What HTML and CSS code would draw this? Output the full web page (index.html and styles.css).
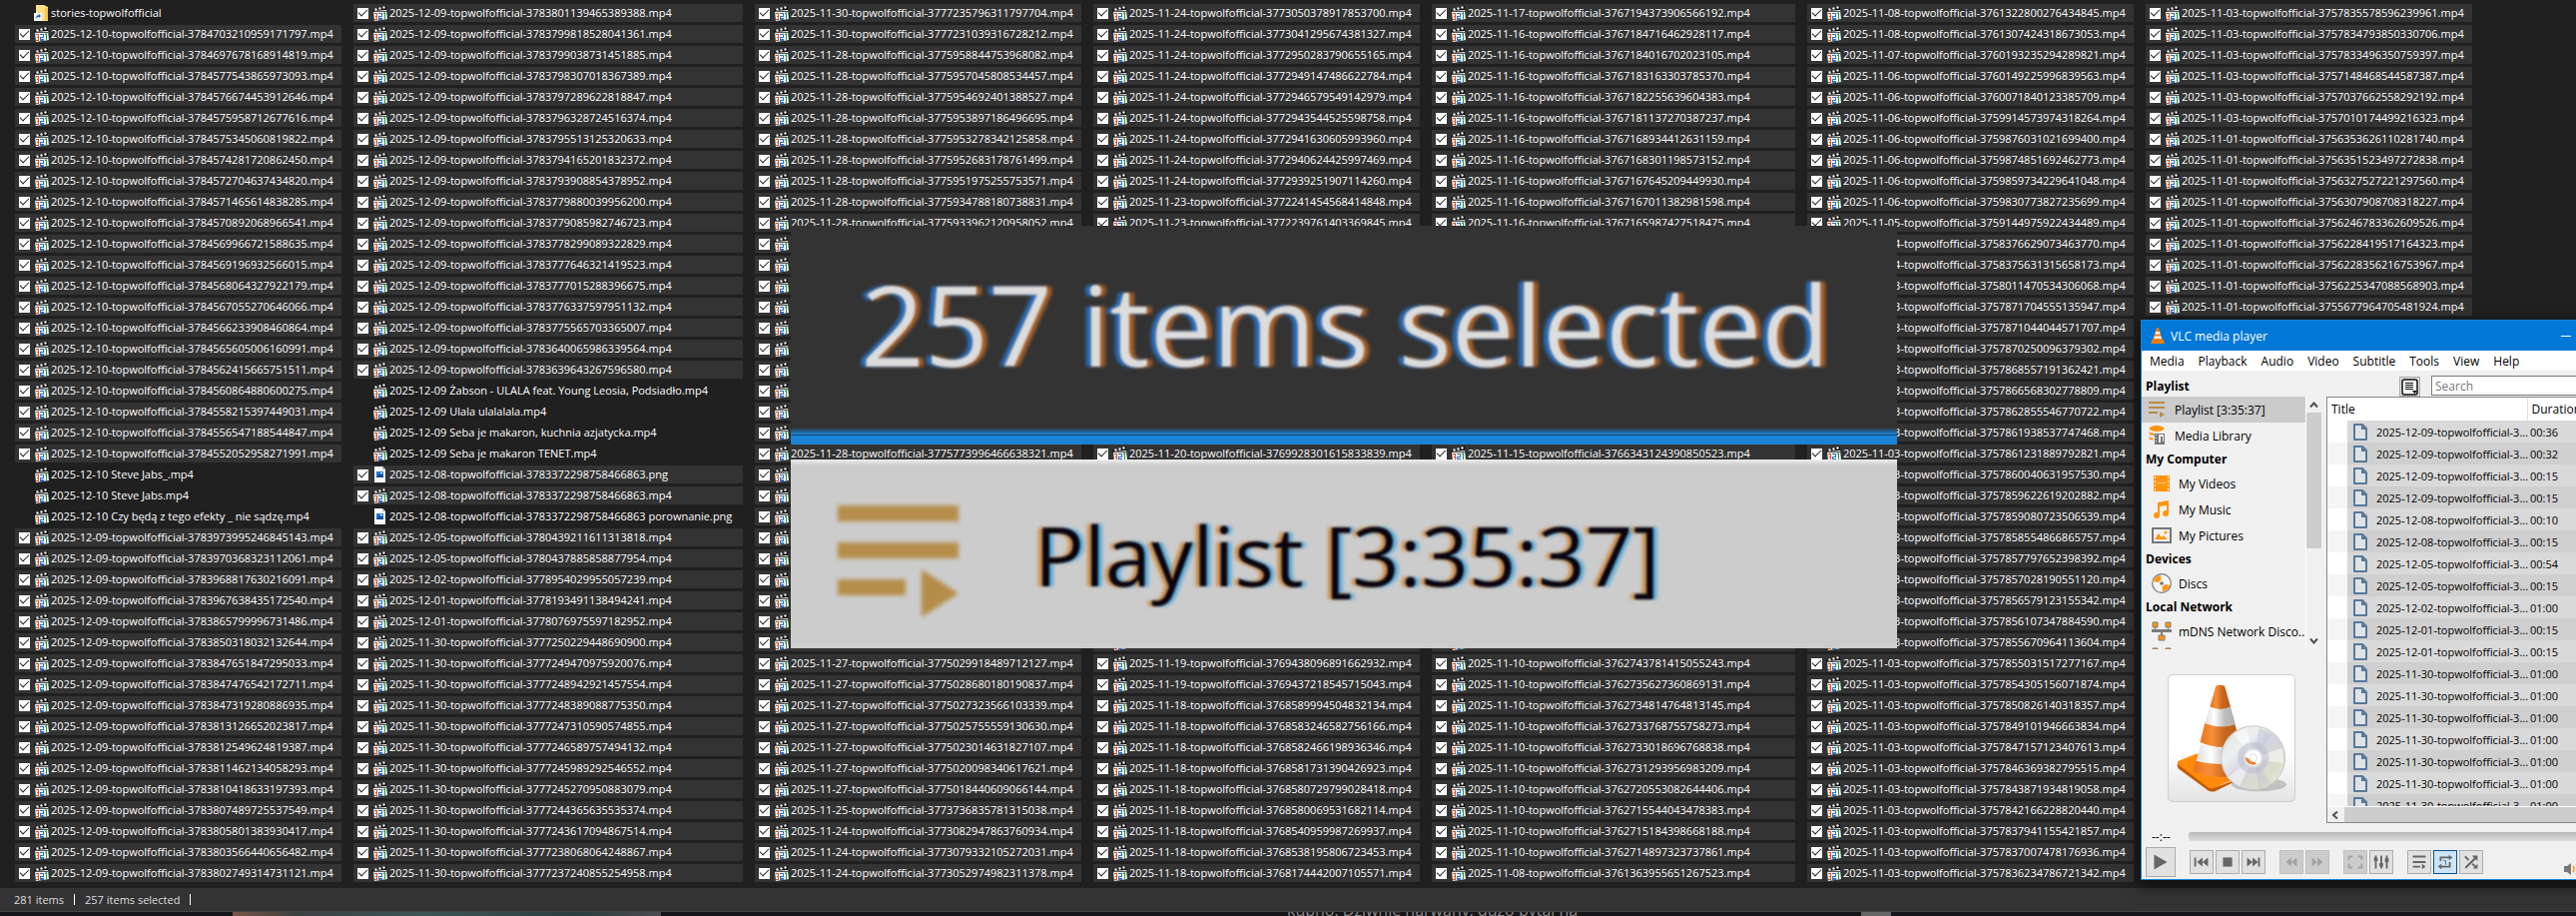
FILE: index.html
```html
<!DOCTYPE html>
<html lang="en">
<head>
    <meta charset="utf-8">
    <title>stories-topwolfofficial</title>
    <link rel="stylesheet" href="styles.css">
</head>
<body>
    <svg class="defs" aria-hidden="true">
        <symbol id="clapper" viewBox="0 0 15 16">
            <path d="M0 5L14 1V5L1 8Z" fill="#111"/>
            <path d="M2 4l2-1 1 2-2 1zM6 3l2-1 1 2-2 1zM10 2l2-1 1 2-2 1z" fill="#e8e8e8"/>
            <path d="M1 6L14 5L15 14L2 16Z" fill="#f2f2f2"/>
            <path d="M1 6h13v1H1z" fill="#555"/>
            <path d="M2 8h3v7H2v-1h2v-2H3v-1h1V9H2z" fill="#d9531e"/>
            <path d="M6 8h4v4H7v1h3v2H6v-4h3V9H6z" fill="#2f74c8"/>
            <path d="M11 8l2-1v7h-1V9h-1z" fill="#2a9a3a"/>
        </symbol>
        <symbol id="png" viewBox="0 0 15 16">
            <path d="M2 0h8l3 3v13H2z" fill="#f7f7f7"/>
            <path d="M10 0v3h3z" fill="#b8bec4"/>
            <path d="M4 5h7v6H4z" fill="#2478d4"/>
            <path d="M4 11l3-4 2 2 2-1v3z" fill="#0d4f9e"/>
            <path d="M8 6h2v1H8z" fill="#fff"/>
        </symbol>
        <symbol id="folder" viewBox="0 0 15 16">
            <path d="M2 0h8l4 2v14H2z" fill="#ffe08a"/>
            <path d="M11 3h3v12h-3z" fill="#f3c94f"/>
            <path d="M0 8h8v8H0z" fill="#f4f8fc"/>
            <path d="M2 14c0-3 1-4 3-4V9l2 2-2 2v-1c-1 0-2 0-3 2z" fill="#1d65b5"/>
        </symbol>
        <symbol id="doc" viewBox="0 0 14 17">
            <path d="M1 1h8l4 4v11H1z" fill="#dfe3e6" stroke="#56799a" stroke-width="2" stroke-linejoin="round"/>
            <path d="M8 1v5h5z" fill="#56799a"/>
        </symbol>
        <symbol id="playlist" viewBox="0 0 16 16">
            <path d="M0 0h16v2H0zM0 5h16v2H0zM0 10h9v2H0z" fill="currentColor"/>
            <path d="M11 10l5 3-5 3z" fill="currentColor"/>
        </symbol>
        <symbol id="network" viewBox="0 0 20 20">
            <path d="M0 8h20v3H0zM3 6h1v3H3zM16 6h1v3h-1zM9 10h2v4H9z" fill="#7d7d7d"/>
            <path d="M1 1h5v5H1zM14 1h5v5h-5zM7 14h6v5H7z" fill="#ff950e" stroke="#7d7d7d"/>
        </symbol>
    </svg>

    <div class="desktop">
        <main class="explorer">
            <div class="files" id="files"></div>
            <footer class="status">
                <span>281 items</span>
                <span>257 items selected</span>
            </footer>
        </main>
        <div class="behind">
            <div class="behind-photo"></div>
            <p>kupno. Dziwnie narwany, dużo pytał na</p>
            <div class="behind-thumb"></div>
        </div>

        <div class="callout callout-items"><span>257 items selected</span></div>
        <div class="callout callout-playlist">
            <svg class="callout-icon" viewBox="0 0 121 112" aria-hidden="true">
                <path d="M0 0h121v16H0zM0 37h121v16H0zM0 74h68v16H0zM84 64l37 24-37 24z" fill="#b48d49"/>
            </svg>
            <span>Playlist [3:35:37]</span>
        </div>

        <section class="vlc">
            <header class="titlebar">
                <svg class="cone" viewBox="0 0 14 16" aria-hidden="true">
                    <path d="M2 11h10l2 5H0z" fill="#f07d00"/>
                    <path d="M6 0h2l3.500 12c-2 2-7 2-9 0z" fill="#ef7a10"/>
                    <path d="M5 4h4l.7 2.500H4.300zM3.700 8.500h6.600l.7 2.500H3z" fill="#f5f5f5"/>
                </svg>
                <span>VLC media player</span>
                <button class="minimise" aria-label="Minimise"></button>
            </header>
            <nav class="menu">
                <button>Media</button><button>Playback</button><button>Audio</button><button>Video</button>
                <button>Subtitle</button><button>Tools</button><button>View</button><button>Help</button>
            </nav>
            <div class="content">
                <div class="side">
                    <div class="side-head">
                        <b>Playlist</b>
                        <button class="view-mode" aria-label="Change view">
                            <svg viewBox="0 0 17 17" aria-hidden="true">
                                <rect x="1" y="1" width="15" height="15" rx="2" fill="#f6f9fb" stroke="#111" stroke-width="1.500"/>
                                <path d="M4 4h8v1H4zM4 6h8v1H4zM4 8h8v1H4zM4 10h8v1H4zM11 12h5l-2.500 3z" fill="#111"/>
                            </svg>
                        </button>
                    </div>
                    <div class="tree-wrap">
                        <div class="tree">
                            <a href="#playlist" class="node active"><svg class="i16" aria-hidden="true"><use href="#playlist"/></svg>Playlist [3:35:37]</a>
                            <a href="#library" class="node">
                                <svg class="i16" viewBox="0 0 16 20" aria-hidden="true">
                                    <ellipse cx="8" cy="3" rx="7.500" ry="3" fill="#ff950e"/>
                                    <path d="M.5 6c2 2 6 2 6 2v2C3 10 .5 9 .5 8zM.5 11c2 2 4 1.500 4 1.500v2C2 14.500.5 14 .5 13z" fill="#ff950e"/>
                                    <path d="M6 8h10v11H6z" fill="#777"/>
                                    <path d="M7 9h1v1H7zM7 12h1v1H7zM7 15h1v1H7zM10 9h5v7h-1v-5h-2v6h-2z" fill="#f0f0f0"/>
                                </svg>Media Library</a>
                            <h3>My Computer</h3>
                            <a href="#videos" class="node child">
                                <svg class="i20" viewBox="0 0 20 20" aria-hidden="true">
                                    <path d="M2 2h16v16H2z" fill="#ff950e"/>
                                    <path d="M3 3h1v2H3zM3 7h1v2H3zM3 11h1v2H3zM3 15h1v2H3zM16 3h1v2h-1zM16 7h1v2h-1zM16 11h1v2h-1zM16 15h1v2h-1z" fill="#fff"/>
                                    <path d="M5 9h10v1H5z" fill="#ffc67a"/>
                                </svg>My Videos</a>
                            <a href="#music" class="node child">
                                <svg class="i20" viewBox="0 0 20 20" aria-hidden="true">
                                    <path d="M6 3l11-2v13h-2V6L8 7v9H6z" fill="#ff950e"/>
                                    <circle cx="5" cy="16" r="3" fill="#ff950e"/><circle cx="14" cy="14" r="3" fill="#ff950e"/>
                                </svg>My Music</a>
                            <a href="#pictures" class="node child">
                                <svg class="i20" viewBox="0 0 20 20" aria-hidden="true">
                                    <path d="M1 3h18v14H1z" fill="#f0f0f0" stroke="#777" stroke-width="2"/>
                                    <path d="M3 14l4-6 3 4 2-2 4 4z" fill="#ff950e"/><circle cx="14" cy="7" r="1.500" fill="#ff950e"/>
                                </svg>My Pictures</a>
                            <h3>Devices</h3>
                            <a href="#discs" class="node child">
                                <svg class="i20" viewBox="0 0 20 20" aria-hidden="true">
                                    <circle cx="10" cy="10" r="9.300" fill="#f7f7f7" stroke="#777" stroke-width="1.200"/>
                                    <path d="M10 10L2 8A8 8 0 0 1 9 2zM10 10l8 2a8 8 0 0 1-7 6z" fill="#ff950e"/>
                                    <circle cx="10" cy="10" r="3.200" fill="#f0f0f0"/><circle cx="10" cy="10" r="1.800" fill="#777"/>
                                </svg>Discs</a>
                            <h3>Local Network</h3>
                            <a href="#mdns" class="node child"><svg class="i20" aria-hidden="true"><use href="#network"/></svg>mDNS Network Disco...</a>
                            <a href="#sap" class="node child" aria-label="Network streams"><svg class="i20" aria-hidden="true"><use href="#network"/></svg></a>
                        </div>
                        <div class="vscroll">
                            <svg viewBox="0 0 15 15" aria-hidden="true"><path d="M4 10l3.500-4 3.500 4" fill="none" stroke="#505050" stroke-width="2"/></svg>
                            <div class="vthumb"></div>
                            <svg viewBox="0 0 15 15" aria-hidden="true"><path d="M4 5l3.500 4 3.500-4" fill="none" stroke="#505050" stroke-width="2"/></svg>
                        </div>
                    </div>
                    <div class="art">
                        <svg viewBox="0 0 128 128" aria-hidden="true">
                            <defs>
                                <linearGradient id="og"><stop offset="0" stop-color="#e8741a"/><stop offset=".3" stop-color="#f58f3a"/><stop offset=".6" stop-color="#c9661f"/><stop offset="1" stop-color="#b85c1a"/></linearGradient>
                                <linearGradient id="wg"><stop offset="0" stop-color="#ddd"/><stop offset=".3" stop-color="#fff"/><stop offset=".65" stop-color="#bdbdbd"/><stop offset="1" stop-color="#b0b0b0"/></linearGradient>
                                <linearGradient id="dg" x2="1" y2="1"><stop offset="0" stop-color="#d9dbd8"/><stop offset=".3" stop-color="#eef0f0"/><stop offset=".5" stop-color="#d3d3e2"/><stop offset=".75" stop-color="#dcdccb"/><stop offset="1" stop-color="#eceff1"/></linearGradient>
                            </defs>
                            <ellipse cx="92" cy="111" rx="28" ry="7" fill="#000" opacity=".18"/>
                            <path d="M9 90L47 114Q90 100 84 92V100L47 118Q43 119 40 117L10 95Q8 93 9 90Z" fill="#c65a00"/>
                            <path d="M10 87L28 80H80L86 98L47 114Q43 116 40 114L10 91Q8 89 10 87Z" fill="#ff8a0c"/>
                            <path d="M28 87Q50 94 78 87L81 98Q54 109 25 98Q24 96 28 87Z" fill="url(#og)"/>
                            <path d="M33 70Q52 77 73 70L78 87Q52 94 28 87Z" fill="url(#wg)"/>
                            <path d="M37 48Q53 55 67 48L73 70Q52 77 32 68Z" fill="url(#og)"/>
                            <path d="M42 32Q53 37 63 32L68 50Q53 55 37 49Z" fill="url(#wg)"/>
                            <path d="M48 11Q52 9 57 11L63 32Q53 37 42 32Z" fill="url(#og)"/>
                            <circle cx="86" cy="84" r="32.500" fill="url(#dg)" stroke="#c4c6c8"/>
                            <path d="M86 84L66 60L80 53ZM86 84l30-10 1 16zM86 84l-26 20 12 9z" fill="#fff" opacity=".5"/>
                            <path d="M86 84L92 53L106 60ZM86 84l6 31 12-5z" fill="#b9b9cf" opacity=".35"/>
                            <circle cx="86" cy="84" r="16" fill="#b9b9ca" opacity=".5"/>
                            <circle cx="86" cy="84" r="10" fill="#dcdce4"/>
                            <circle cx="86" cy="84" r="8" fill="#fff"/>
                            <path d="M78 83l12 7a8 8 0 0 1-12-7z" fill="#e58430"/>
                            <circle cx="86" cy="84" r="4" fill="none" stroke="#ddd"/>
                        </svg>
                    </div>
                </div>
                <div class="list-side">
                    <input class="search" type="text" placeholder="Search" aria-label="Search">
                    <div class="list-box">
                        <div class="list-view">
                            <table>
                                <colgroup><col class="col-indent"><col class="col-title"><col></colgroup>
                                <thead><tr><th class="title-head" colspan="2">Title</th><th>Duration</th></tr></thead>
                                <tbody id="tracks"></tbody>
                            </table>
                        </div>
                        <div class="hscroll">
                            <svg viewBox="0 0 15 15" aria-hidden="true"><path d="M10 4L6 7.500l4 3.500" fill="none" stroke="#505050" stroke-width="2"/></svg>
                            <div class="hthumb"></div>
                        </div>
                    </div>
                </div>
            </div>
            <div class="seek">
                <span>--:--</span>
                <input type="range" aria-label="Seek" disabled>
            </div>
            <div class="controls">
                <button class="play" aria-label="Play"><svg viewBox="0 0 30 30"><path d="M8 7l14 8-14 8z"/></svg></button>
                <div class="group">
                    <button aria-label="Previous"><svg viewBox="0 0 24 24"><path d="M4 7h2v10H4zM13 7v10l-6-5zM19 7v10l-6-5z"/></svg></button>
                    <button aria-label="Stop"><svg viewBox="0 0 24 24"><path d="M7 7h10v10H7z"/></svg></button>
                    <button aria-label="Next"><svg viewBox="0 0 24 24"><path d="M5 7v10l6-5zM11 7v10l6-5zM17 7h2v10h-2z"/></svg></button>
                </div>
                <div class="group">
                    <button aria-label="Slower" disabled><svg viewBox="0 0 24 24"><path d="M12 7v10l-6-5zM18 7v10l-6-5z"/></svg></button>
                    <button aria-label="Faster" disabled><svg viewBox="0 0 24 24"><path d="M6 7v10l6-5zM12 7v10l6-5z"/></svg></button>
                </div>
                <div class="group">
                    <button aria-label="Fullscreen" disabled><svg viewBox="0 0 24 24"><path d="M4 5h5v2H6v3H4zM15 5h5v5h-2V7h-3zM4 14h2v3h3v2H4zM18 14h2v5h-5v-2h3z"/></svg></button>
                    <button aria-label="Extended settings"><svg viewBox="0 0 24 24"><path d="M5 5h2v14H5zM4 7h4v4H4zM11 5h2v14h-2zM10 13h4v4h-4zM17 5h2v14h-2zM16 8h4v4h-4z"/></svg></button>
                </div>
                <div class="group">
                    <button aria-label="Playlist"><svg viewBox="0 0 24 24"><path d="M5 5h14v2H5zM5 11h14v2H5zM5 16h8v2H5zM15 14l4 3-4 3z"/></svg></button>
                    <button class="on" aria-label="Loop"><svg viewBox="0 0 24 24"><path d="M6 11V6h10V4l4 3-4 3V8H8v3zM18 12v6H8v2l-4-3 4-3v2h8v-4zM10 10h3v5h-1v-4h-2z"/></svg></button>
                    <button aria-label="Random"><svg viewBox="0 0 24 24"><path d="M6 5l4 4-1.500 1.500-4-4zM19 5v6l-2-2-10.500 10L5 17.500 15 7.500 13 5zM14 13l3 3 2-2v5h-5l1.500-1.500-3-3z"/></svg></button>
                </div>
                <svg class="volume" viewBox="0 0 22 14" aria-hidden="true">
                    <path d="M0 4h3l4-3v12l-4-3H0z" fill="#777"/>
                    <path d="M9 4q2 3 0 6M12 2q3 5 0 10M15 0q4 7 0 14" fill="none" stroke="#ff950e" stroke-width="1.500"/>
                </svg>
            </div>
        </section>
    </div>
    <script src="files.js"></script>
</body>
</html>
```
FILE: styles.css
```css
* {
    box-sizing: border-box;
}

body {
    margin: 0;
    background: #202020;
    font-family: "Open Sans", "Noto Sans", sans-serif;
    font-size: 11px;
    color: #fff;
}

button,
input {
    font: inherit;
    margin: 0;
}

.defs {
    display: none;
}

.desktop {
    position: relative;
    min-height: 100vh;
    overflow: hidden;
}

/* file list */
.files {
    display: grid;
    grid-template-columns: 327fr 390fr 327fr 327fr 364fr 327fr 327fr 92fr;
    column-gap: 12px;
    padding: 4px 0 6px 15px;
}

.column {
    display: flex;
    flex-direction: column;
    gap: 3px;
}

.file {
    display: flex;
    align-items: center;
    height: 18px;
    padding-left: 4px;
    line-height: 16px;
    white-space: nowrap;
}

.file.selected {
    background: #333;
}

.file input {
    appearance: none;
    width: 11px;
    height: 11px;
    margin-right: 4px;
    background: #fff;
    visibility: hidden;
}

.file.selected input {
    visibility: visible;
    display: flex;
    align-items: center;
    justify-content: center;
}

.file input:checked::before {
    content: "";
    width: 8px;
    height: 4px;
    margin-bottom: 3px;
    border-left: 1px solid #222;
    border-bottom: 1px solid #222;
    transform: rotate(-45deg);
}

.file svg {
    width: 15px;
    height: 16px;
    margin-right: 2px;
}

.status {
    display: flex;
    align-items: center;
    height: 23px;
    padding-left: 14px;
    background: #333;
    color: #ddd;
}

.status span {
    display: flex;
    align-items: center;
}

.status span::after {
    content: "";
    width: 1px;
    height: 11px;
    margin: 0 10px;
    background: #fff;
}

.behind {
    display: grid;
    grid-template-columns: 233fr 429fr 627fr 575fr 30fr 686fr;
    height: 5px;
    overflow: hidden;
    background: #161517;
    border-top: 1px solid #444;
}

.behind-photo {
    grid-column: 2;
    background: linear-gradient(90deg, #7a5446, #3b4040 15%, #3d5555 45%, #2b3c3c 80%, #4a4d4d);
}

.behind p {
    grid-column: 4;
    margin: -4px 0 0;
    font-size: 16px;
    line-height: 4px;
    color: #8a8a8a;
}

.behind-thumb {
    background: #666;
}

/* enlarged details */
.callout {
    position: absolute;
    left: 792px;
    right: 680px;
    display: flex;
    align-items: center;
    white-space: nowrap;
}

.callout span {
    filter: blur(1px);
}

.callout-items {
    top: 226px;
    height: 219px;
    padding: 0 0 24px 70px;
    background: linear-gradient(#333 0 202px, #1883d7 209px, #16476f 209px 210px, #1883d7 210px);
    color: #dcdcdc;
    font-size: 112px;
    text-shadow: -5px 0 3px #2f6fb8, 5px 0 3px #a5602c;
}

.callout-playlist {
    top: 460px;
    height: 189px;
    gap: 76px;
    padding: 0 0 0 47px;
    background: linear-gradient(#eee, #ccc 6px);
    color: #0a0510;
    font-size: 83px;
    text-shadow: -4px 0 3px #c98a45, 4px 0 3px #58a9d8;
}

.callout-icon {
    width: 121px;
    height: 112px;
    margin-top: 14px;
    filter: blur(2px);
}

/* vlc */
.vlc {
    position: absolute;
    top: 320px;
    left: 2144px;
    right: -40px;
    background: #f0f0f0;
    border: 1px solid #1883d7;
    box-shadow: 0 4px 14px 2px rgba(0, 0, 0, 0.6);
    color: #000;
    font-size: 12px;
}

.titlebar {
    display: flex;
    align-items: center;
    gap: 6px;
    height: 30px;
    padding: 0 44px 0 9px;
    background: #0078d7;
    color: #fff;
}

.cone {
    width: 14px;
    height: 16px;
}

.minimise {
    width: 10px;
    height: 1px;
    margin-left: auto;
    padding: 0;
    border: 0;
    background: #fff;
}

.menu {
    display: flex;
    gap: 14px;
    height: 20px;
    padding: 0 8px;
    background: #fff;
}

.menu button {
    padding: 0;
    border: 0;
    background: none;
    color: #000;
}

.content {
    display: flex;
    gap: 5px;
    padding-top: 5px;
}

.side {
    width: 180px;
}

.side-head {
    display: flex;
    align-items: center;
    position: relative;
    height: 21px;
    padding-left: 4px;
}

.view-mode {
    position: absolute;
    left: 258px;
    width: 21px;
    height: 20px;
    padding: 1px;
    border: 1px solid #adadad;
    background: #e1e1e1;
}

.view-mode svg,
.controls button svg {
    display: block;
}

.tree-wrap {
    display: flex;
    height: 253px;
}

.tree {
    flex: 1;
    min-width: 0;
    overflow: hidden;
    border-right: 1px solid #fff;
}

.node {
    display: flex;
    align-items: center;
    gap: 10px;
    height: 26px;
    padding-left: 7px;
    color: #000;
    text-decoration: none;
    white-space: nowrap;
}

.node.active {
    background: #cbcbcb;
}

.node.active svg {
    color: #b48d49;
}

.node.child {
    gap: 7px;
    padding-left: 10px;
}

.node svg {
    flex: none;
}

.i16 {
    width: 16px;
    height: 20px;
}

.i20 {
    width: 20px;
    height: 20px;
}

.tree h3 {
    margin: 0;
    padding-left: 4px;
    font-size: 12px;
    line-height: 22px;
}

.vscroll {
    display: flex;
    flex-direction: column;
    width: 15px;
}

.vthumb {
    height: 136px;
    margin-bottom: auto;
    background: #cdcdcd;
}

.vscroll svg,
.hscroll svg {
    width: 15px;
    height: 16px;
}

.art {
    width: 128px;
    margin: 25px 0 0 26px;
    border: 1px solid #cfcfcf;
    border-radius: 5px;
    background: linear-gradient(#fff 60%, #e4e4e4);
}

.art svg {
    display: block;
}

.list-side {
    flex: 1;
    min-width: 0;
    display: flex;
    flex-direction: column;
}

.search {
    height: 20px;
    margin: 0 0 1px 105px;
    padding: 0 3px;
    border: 1px solid #7a7a7a;
    background: #fff;
}

.search::placeholder {
    color: #7a7a7a;
}

.list-box {
    border: 1px solid #828790;
    background: #fff;
}

.list-view {
    height: 409px;
    overflow: hidden;
}

table {
    width: 100%;
    border-collapse: collapse;
    table-layout: fixed;
}

.col-indent {
    width: 20px;
}

.col-title {
    width: 180px;
}

th {
    height: 23px;
    padding: 0 4px;
    text-align: left;
    font-weight: normal;
}

.title-head {
    border-right: 1px solid #e0e0e0;
}

td {
    height: 22px;
    padding: 0 3px;
    background: #d9d9d9;
    font-size: 11px;
    white-space: nowrap;
}

tr:nth-child(even) td {
    background: #cfcfcf;
}

td.indent {
    background: #fff;
}

tr:nth-child(even) td.indent {
    background: #f5f5f5;
}

.track {
    display: flex;
    align-items: center;
    gap: 9px;
    padding-left: 3px;
}

.track svg {
    flex: none;
    width: 14px;
    height: 17px;
}

.hscroll {
    display: flex;
    align-items: center;
    gap: 2px;
    height: 16px;
    background: #f0f0f0;
    border-top: 1px solid #fff;
}

.hthumb {
    flex: 1;
    height: 15px;
    background: #cdcdcd;
}

.seek {
    display: flex;
    align-items: center;
    gap: 18px;
    padding: 4px 0 0 10px;
    height: 22px;
}

.seek input {
    appearance: none;
    flex: 1;
    height: 9px;
    border-radius: 3px;
    background: linear-gradient(#b9b9b9, #dedede);
}

.seek input::-webkit-slider-thumb {
    appearance: none;
    width: 0;
}

.controls {
    display: flex;
    align-items: center;
    gap: 14px;
    padding: 2px 4px;
}

.group {
    display: flex;
    gap: 2px;
}

.controls button {
    width: 24px;
    height: 24px;
    padding: 0;
    border: 1px solid #adadad;
    background: #e1e1e1;
    fill: #666;
}

.controls .play {
    width: 30px;
    height: 30px;
}

.controls button:disabled {
    border-color: #bfbfbf;
    background: #ccc;
    fill: #a3a3a3;
}

.controls .on {
    border-color: #005499;
    background: #cce4f7;
}

.volume {
    width: 22px;
    height: 14px;
    margin: 14px 25px 0 auto;
}
```
FILE: files.js
```js
// "MM-DD id" is a selected video, "-name" an unselected file, "+name" a selected one
const columns = [
    [
        '-stories-topwolfofficial',
        '12-10 3784703210959171797', '12-10 3784697678168914819', '12-10 3784577543865973093',
        '12-10 3784576674453912646', '12-10 3784575958712677616', '12-10 3784575345060819822',
        '12-10 3784574281720862450', '12-10 3784572704637434820', '12-10 3784571465614838285',
        '12-10 3784570892068966541', '12-10 3784569966721588635', '12-10 3784569196932566015',
        '12-10 3784568064327922179', '12-10 3784567055270646066', '12-10 3784566233908460864',
        '12-10 3784565605006160991', '12-10 3784562415665751511', '12-10 3784560864880600275',
        '12-10 3784558215397449031', '12-10 3784556547188544847', '12-10 3784552052958271991',
        '-2025-12-10 Steve Jabs_.mp4',
        '-2025-12-10 Steve Jabs.mp4',
        '-2025-12-10 Czy będą z tego efekty _ nie sądzę.mp4',
        '12-09 3783973995246845143', '12-09 3783970368323112061', '12-09 3783968817630216091',
        '12-09 3783967638435172540', '12-09 3783865799996731486', '12-09 3783850318032132644',
        '12-09 3783847651847295033', '12-09 3783847476542172711', '12-09 3783847319280886935',
        '12-09 3783813126652023817', '12-09 3783812549624819387', '12-09 3783811462134058293',
        '12-09 3783810418633197393', '12-09 3783807489725537549', '12-09 3783805801383930417',
        '12-09 3783803566440656482', '12-09 3783802749314731121'
    ],
    [
        '12-09 3783801139465389388', '12-09 3783799818528041361', '12-09 3783799038731451885',
        '12-09 3783798307018367389', '12-09 3783797289622818847', '12-09 3783796328724516374',
        '12-09 3783795513125320633', '12-09 3783794165201832372', '12-09 3783793908854378952',
        '12-09 3783779880039956200', '12-09 3783779085982746723', '12-09 3783778299089322829',
        '12-09 3783777646321419523', '12-09 3783777015288396675', '12-09 3783776337597951132',
        '12-09 3783775565703365007', '12-09 3783640065986339564', '12-09 3783639643267596580',
        '-2025-12-09 Żabson - ULALA feat. Young Leosia, Podsiadło.mp4',
        '-2025-12-09 Ulala ulalalala.mp4',
        '-2025-12-09 Seba je makaron, kuchnia azjatycka.mp4',
        '-2025-12-09 Seba je makaron TENET.mp4',
        '+2025-12-08-topwolfofficial-3783372298758466863.png',
        '12-08 3783372298758466863',
        '-2025-12-08-topwolfofficial-3783372298758466863 porownanie.png',
        '12-05 3780439211611313818', '12-05 3780437885858877954', '12-02 3778954029955057239',
        '12-01 3778193491138494241', '12-01 3778076975597182952', '11-30 3777250229448690900',
        '11-30 3777249470975920076', '11-30 3777248942921457554', '11-30 3777248389088775350',
        '11-30 3777247310590574855', '11-30 3777246589757494132', '11-30 3777245989292546552',
        '11-30 3777245270950883079', '11-30 3777244365635535374', '11-30 3777243617094867514',
        '11-30 3777238068064248867', '11-30 3777237240855254958'
    ],
    [
        '11-30 3777235796311797704', '11-30 3777231039316728212', '11-28 3775958844753968082',
        '11-28 3775957045808534457', '11-28 3775954692401388527', '11-28 3775953897186496695',
        '11-28 3775953278342125858', '11-28 3775952683178761499', '11-28 3775951975255753571',
        '11-28 3775934788180738831', '11-28 3775933962120958052',
        '', '', '', '', '', '', '', '', '', '',
        '11-28 3775773996466638321',
        '', '', '', '', '', '', '', '', '',
        '11-27 3775029918489712127', '11-27 3775028680180190837', '11-27 3775027323566103339',
        '11-27 3775025755559130630', '11-27 3775023014631827107', '11-27 3775020098340617621',
        '11-27 3775018440609066144', '11-25 3773736835781315038', '11-24 3773082947863760934',
        '11-24 3773079332105272031', '11-24 3773052974982311378'
    ],
    [
        '11-24 3773050378917853700', '11-24 3773041295674381327', '11-24 3772950283790655165',
        '11-24 3772949147486622784', '11-24 3772946579549142979', '11-24 3772943544525598758',
        '11-24 3772941630605993960', '11-24 3772940624425997469', '11-24 3772939251907114260',
        '11-23 3772241454568414848', '11-23 3772239761403369845',
        '', '', '', '', '', '', '', '', '', '',
        '11-20 3769928301615833839',
        '', '', '', '', '', '', '', '', '',
        '11-19 3769438096891662932', '11-19 3769437218545715043', '11-18 3768589994504832134',
        '11-18 3768583246582756166', '11-18 3768582466198936346', '11-18 3768581731390426923',
        '11-18 3768580729799028418', '11-18 3768580069531682114', '11-18 3768540959987269937',
        '11-18 3768538195806723453', '11-18 3768174442007105571'
    ],
    [
        '11-17 3767194373906566192', '11-16 3767184716462928117', '11-16 3767184016702023105',
        '11-16 3767183163303785370', '11-16 3767182255639604383', '11-16 3767181137270387237',
        '11-16 3767168934412631159', '11-16 3767168301198573152', '11-16 3767167645209449930',
        '11-16 3767167011382981598', '11-16 3767165987427518475',
        '', '', '', '', '', '', '', '', '', '',
        '11-15 3766343124390850523',
        '', '', '', '', '', '', '', '', '',
        '11-10 3762743781415055243', '11-10 3762735627360869131', '11-10 3762734814764813145',
        '11-10 3762733768755758273', '11-10 3762733018696768838', '11-10 3762731293956983209',
        '11-10 3762720553082644406', '11-10 3762715544043478383', '11-10 3762715184398668188',
        '11-10 3762714897323737861', '11-08 3761363955651267523'
    ],
    [
        '11-08 3761322800276434845', '11-08 3761307424318673053', '11-07 3760193235294289821',
        '11-06 3760149225996839563', '11-06 3760071840123385709', '11-06 3759914573974318264',
        '11-06 3759876031021699400', '11-06 3759874851692462773', '11-06 3759859734229641048',
        '11-06 3759830773827235699', '11-05 3759144975922434489', '11-04 3758376629073463770',
        '11-04 3758375631315658173', '11-03 3758011470534306068', '11-03 3757871704555135947',
        '11-03 3757871044044571707', '11-03 3757870250096379302', '11-03 3757868557191362421',
        '11-03 3757866568302778809', '11-03 3757862855546770722', '11-03 3757861938537747468',
        '11-03 3757861231889792821', '11-03 3757860040631957530', '11-03 3757859622619202882',
        '11-03 3757859080723506539', '11-03 3757858554866865757', '11-03 3757857797652398392',
        '11-03 3757857028190551120', '11-03 3757856579123155342', '11-03 3757856107347884590',
        '11-03 3757855670964113604', '11-03 3757855031517277167', '11-03 3757854305156071874',
        '11-03 3757850826140318357', '11-03 3757849101946663834', '11-03 3757847157123407613',
        '11-03 3757846369382795515', '11-03 3757843871934819058', '11-03 3757842166228820440',
        '11-03 3757837941155421857', '11-03 3757837007478176936', '11-03 3757836234786721342'
    ],
    [
        '11-03 3757835578596239961', '11-03 3757834793850330706', '11-03 3757833496350759397',
        '11-03 3757148468544587387', '11-03 3757037662558292192', '11-03 3757010174499216323',
        '11-01 3756353626110281740', '11-01 3756351523497272838', '11-01 3756327527221297560',
        '11-01 3756307908708318227', '11-01 3756246783362609526', '11-01 3756228419517164323',
        '11-01 3756228356216753967', '11-01 3756225347088568903', '11-01 3755677964705481924'
    ]
];

const tracks = [
    ['12-09', '00:36'], ['12-09', '00:32'], ['12-09', '00:15'], ['12-09', '00:15'],
    ['12-08', '00:10'], ['12-08', '00:15'], ['12-05', '00:54'], ['12-05', '00:15'],
    ['12-02', '01:00'], ['12-01', '00:15'], ['12-01', '00:15'], ['11-30', '01:00'],
    ['11-30', '01:00'], ['11-30', '01:00'], ['11-30', '01:00'], ['11-30', '01:00'],
    ['11-30', '01:00'], ['11-30', '01:00']
];

function fileRow(entry) {
    let name = '';
    let selected = true;
    if (entry[0] === '-' || entry[0] === '+') {
        name = entry.slice(1);
        selected = entry[0] === '+';
    } else if (entry) {
        const [date, id] = entry.split(' ');
        name = `2025-${date}-topwolfofficial-${id}.mp4`;
    }
    let icon = 'clapper';
    if (name.endsWith('.png')) icon = 'png';
    if (name.startsWith('stories')) icon = 'folder';
    return `<label class="file${selected ? ' selected' : ''}">
        <input type="checkbox"${selected ? ' checked' : ''}>
        <svg aria-hidden="true"><use href="#${icon}"/></svg>${name}</label>`;
}

document.getElementById('files').innerHTML = columns
    .map(column => `<div class="column">${column.map(fileRow).join('')}</div>`)
    .join('');

document.getElementById('tracks').innerHTML = tracks
    .map(([date, length]) => `<tr><td class="indent"></td>
        <td><div class="track"><svg aria-hidden="true"><use href="#doc"/></svg><span>2025-${date}-topwolfofficial-3...</span></div></td>
        <td>${length}</td></tr>`)
    .join('');
```
